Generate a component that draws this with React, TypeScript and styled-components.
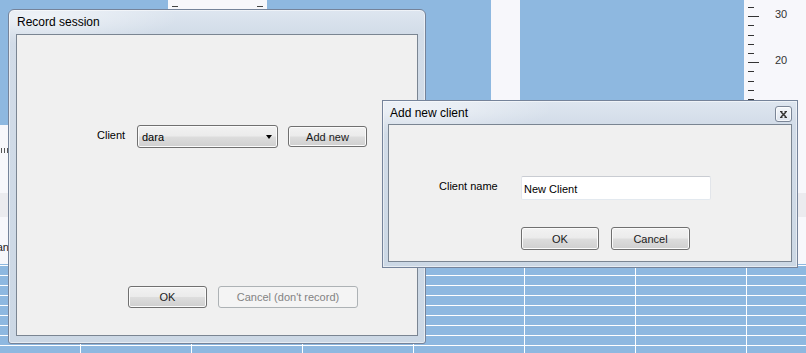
import React from "react";
import styled, { createGlobalStyle } from "styled-components";

const UI_FONT = `"Liberation Sans", Arial, sans-serif`;
const SKY = "#8eb8e0";
const PAPER = "#f7f7fb";

const GlobalStyle = createGlobalStyle`
    html, body {
        margin: 0;
        padding: 0;
        width: 806px;
        height: 353px;
        overflow: hidden;
    }

    body {
        font-family: ${UI_FONT};
        font-size: 11px;
        color: #000;
    }
`;

const Desktop = styled.div`
    position: relative;
    width: 806px;
    height: 353px;
    display: grid;
    grid-template-rows: 125px 139px 1fr;
    background: ${SKY};
    overflow: hidden;
`;

/* ---------- background chart ---------- */

const TopBand = styled.div`
    display: grid;
    grid-template-columns: 168px 99px 224px 29px 224px 62px;
`;

const Column = styled.div<{ $light?: boolean }>`
    background: ${(props): string => (props.$light ? PAPER : SKY)};
`;

const LaneTicks = styled.div`
    display: flex;
    justify-content: space-between;
    padding: 6px 4px 0 4px;

    span {
        width: 6px;
        height: 1px;
        background: #444;
    }
`;

const Ruler = styled.div`
    background: ${PAPER};
    display: flex;
    flex-direction: column;
    padding-top: 7px;
`;

const TickRow = styled.div`
    height: 9.2px;
    display: grid;
    grid-template-columns: 15px 1fr;
    padding-left: 4px;
    align-items: start;
`;

const Tick = styled.div<{ $long: boolean }>`
    width: ${(props): string => (props.$long ? "11px" : "6px")};
    height: 1px;
    background: #333;
`;

const TickLabel = styled.span`
    margin: -8px 0 0 12px;
    font-size: 11px;
    line-height: 12px;
    color: #333;
`;

const Sheet = styled.div`
    background: ${PAPER};
    display: grid;
    grid-template-rows: 68px 24px 1fr;
`;

const SheetRow = styled.div<{ $stripe?: boolean }>`
    background: ${(props): string => (props.$stripe ? "#ebebef" : "transparent")};
`;

const EdgeTicks = styled.div`
    display: flex;
    gap: 2px;
    padding: 23px 0 0 1px;

    span {
        width: 1px;
        height: 5px;
        background: #555;
    }
`;

const EdgeText = styled.div`
    width: 9px;
    display: flex;
    justify-content: flex-end;
    overflow: hidden;
    white-space: nowrap;
    padding-top: 24px;
    color: #222;
`;

const Grid = styled.div`
    background-color: ${SKY};
    background-image: linear-gradient(to bottom, transparent 9px, #ffffff 9px),
        linear-gradient(to right, transparent 110px, #ffffff 110px);
    background-size: 100% 10px, 111px 100%;
    background-position: 0 2px, 81px 0;
`;

/* ---------- windows ---------- */

const Window = styled.div<{ $left: number; $top: number; $width: number; $height: number; $tool?: boolean }>`
    position: absolute;
    left: ${(props): number => props.$left}px;
    top: ${(props): number => props.$top}px;
    width: ${(props): number => props.$width}px;
    height: ${(props): number => props.$height}px;
    box-sizing: border-box;
    display: flex;
    flex-direction: column;
    padding: 0 ${(props): string => (props.$tool ? "5px 5px" : "7px 7px")};
    border: 1px solid #75839a;
    border-radius: ${(props): string => (props.$tool ? "0" : "6px 6px 3px 3px")};
    background: radial-gradient(ellipse 140px 26px at 30px 8px, rgba(255, 255, 255, 0.55), transparent),
        linear-gradient(to bottom, #dee6f0 0px, #d2dce8 24px, #ccd8e5 100%);
    box-shadow: inset 0 0 0 1px rgba(255, 255, 255, 0.5);
`;

const TitleBar = styled.div<{ $height: number }>`
    height: ${(props): number => props.$height}px;
    flex: none;
    display: flex;
    align-items: center;
    justify-content: space-between;
    padding-left: ${(props): string => (props.$height > 23 ? "1px" : "2px")};
    font-size: 12px;
    color: #000;
`;

const CloseButton = styled.div`
    box-sizing: border-box;
    width: 17px;
    height: 16px;
    margin-top: 3px;
    display: flex;
    align-items: center;
    justify-content: center;
    border: 1px solid #7b8697;
    border-radius: 3px;
    background: linear-gradient(to bottom, #f4f7fb, #dde4ee);
    box-shadow: inset 0 0 0 1px rgba(255, 255, 255, 0.7);
`;

const ClientArea = styled.div`
    flex: 1;
    box-sizing: border-box;
    display: flex;
    flex-direction: column;
    border: 1px solid #7a8592;
    background: #f0f0f0;
`;

const FieldRow = styled.div<{ $top: number; $indent: number }>`
    display: flex;
    align-items: center;
    margin-top: ${(props): number => props.$top}px;
    padding-left: ${(props): number => props.$indent}px;
`;

const FieldLabel = styled.span<{ $width: number; $lift?: number }>`
    width: ${(props): number => props.$width}px;
    flex: none;
    margin-top: ${(props): string => (props.$lift ? `-${props.$lift}px` : "0")};
`;

const ButtonRow = styled.div<{ $top?: number; $indent: number; $gap: number; $bottom?: number }>`
    display: flex;
    gap: ${(props): number => props.$gap}px;
    margin-top: ${(props): string => (props.$top !== undefined ? `${props.$top}px` : "auto")};
    padding-left: ${(props): number => props.$indent}px;
    padding-bottom: ${(props): number => props.$bottom || 0}px;
`;

const PushButton = styled.button<{ $width: number; $height?: number }>`
    box-sizing: border-box;
    width: ${(props): number => props.$width}px;
    height: ${(props): number => props.$height || 22}px;
    padding: 0;
    border: 1px solid #707070;
    border-radius: 3px;
    background: linear-gradient(to bottom, #f2f2f2 0%, #ebebeb 48%, #dddddd 52%, #cfcfcf 100%);
    box-shadow: inset 0 0 0 1px #fbfbfb;
    font-family: ${UI_FONT};
    font-size: 11px;
    color: #1a1a1a;

    &:disabled {
        border-color: #adb2b5;
        background: #f4f4f4;
        box-shadow: none;
        color: #838383;
    }
`;

const DropDown = styled.div`
    box-sizing: border-box;
    width: 141px;
    height: 23px;
    display: flex;
    align-items: center;
    justify-content: space-between;
    padding: 0 5px 0 4px;
    border: 1px solid #707070;
    border-radius: 3px;
    background: linear-gradient(to bottom, #f2f2f2 0%, #ebebeb 48%, #dddddd 52%, #cfcfcf 100%);
    box-shadow: inset 0 0 0 1px #fbfbfb;
    margin-right: 10px;
`;

const Arrow = styled.span`
    width: 0;
    height: 0;
    border-left: 3.5px solid transparent;
    border-right: 3.5px solid transparent;
    border-top: 4px solid #000;
`;

const TextBox = styled.input`
    box-sizing: border-box;
    width: 190px;
    height: 24px;
    padding: 2px 0 0 2px;
    border: 1px solid;
    border-color: #c9ccd2 #e2e5ea #e3e9ef #e2e5ea;
    border-radius: 2px;
    background: #fff;
    font-family: ${UI_FONT};
    font-size: 11px;
    color: #000;
    outline: none;
`;

const ruler = Array.from({ length: 13 }, (_, i) => i);

const App: React.FC = (): React.ReactElement => (
    <>
        <GlobalStyle />
        <Desktop>
            <TopBand>
                <Column />
                <Column $light>
                    <LaneTicks>
                        <span />
                        <span />
                    </LaneTicks>
                </Column>
                <Column />
                <Column $light />
                <Column />
                <Ruler>
                    {ruler.map((i) => {
                        const long = i % 5 === 1;
                        return (
                            <TickRow key={i}>
                                <Tick $long={long} />
                                {long && <TickLabel>{30 - Math.floor(i / 5) * 10}</TickLabel>}
                            </TickRow>
                        );
                    })}
                </Ruler>
            </TopBand>
            <Sheet>
                <SheetRow>
                    <EdgeTicks>
                        <span />
                        <span />
                        <span />
                    </EdgeTicks>
                </SheetRow>
                <SheetRow $stripe />
                <SheetRow>
                    <EdgeText>an</EdgeText>
                </SheetRow>
            </Sheet>
            <Grid />

            <Window $left={8} $top={9} $width={418} $height={335}>
                <TitleBar $height={24}>Record session</TitleBar>
                <ClientArea>
                    <FieldRow $top={90} $indent={80}>
                        <FieldLabel $width={40} $lift={3}>
                            Client
                        </FieldLabel>
                        <DropDown>
                            <span>dara</span>
                            <Arrow />
                        </DropDown>
                        <PushButton $width={79} $height={21}>
                            Add new
                        </PushButton>
                    </FieldRow>
                    <ButtonRow $indent={111} $gap={11} $bottom={27}>
                        <PushButton $width={79}>OK</PushButton>
                        <PushButton $width={140} disabled>
                            Cancel (don't record)
                        </PushButton>
                    </ButtonRow>
                </ClientArea>
            </Window>

            <Window $left={382} $top={100} $width={416} $height={168} $tool>
                <TitleBar $height={23}>
                    Add new client
                    <CloseButton>
                        <svg width="7" height="7" viewBox="0 0 7 7">
                            <path d="M1 1 L6 6 M6 1 L1 6" stroke="#333" strokeWidth="1.5" />
                            <path d="M0 0.5 H2.5 M4.5 0.5 H7 M0 6.5 H2.5 M4.5 6.5 H7" stroke="#333" strokeWidth="1" />
                        </svg>
                    </CloseButton>
                </TitleBar>
                <ClientArea>
                    <FieldRow $top={51} $indent={50}>
                        <FieldLabel $width={82} $lift={4}>
                            Client name
                        </FieldLabel>
                        <TextBox defaultValue="New Client" />
                    </FieldRow>
                    <ButtonRow $top={27} $indent={132} $gap={12}>
                        <PushButton $width={78} $height={23}>
                            OK
                        </PushButton>
                        <PushButton $width={79} $height={23}>
                            Cancel
                        </PushButton>
                    </ButtonRow>
                </ClientArea>
            </Window>
        </Desktop>
    </>
);

export default App;
